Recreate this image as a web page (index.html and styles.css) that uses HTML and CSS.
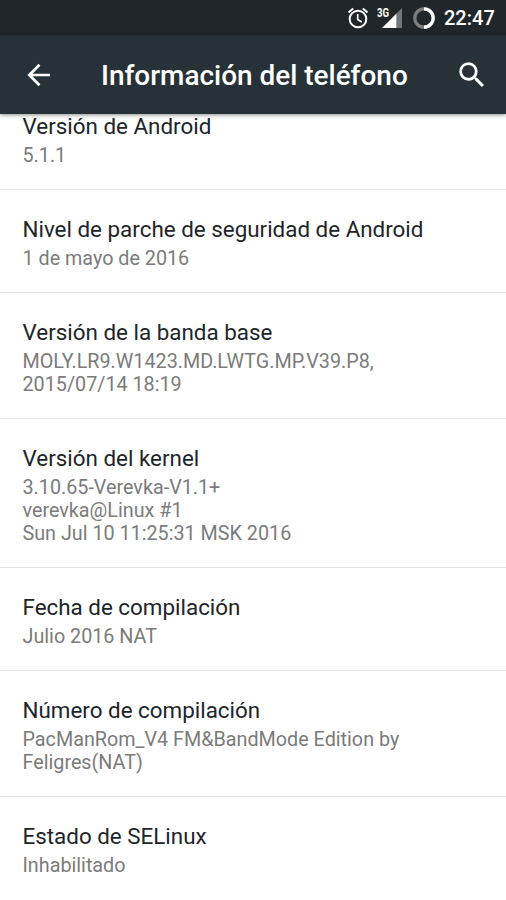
FILE: index.html
```html
<!DOCTYPE html>
<html lang="es">
<head>
<meta charset="utf-8">
<title>Información del teléfono</title>
<link rel="stylesheet" href="styles.css">
</head>
<body>
<div class="status">
  <svg class="alarm" width="22" height="22" viewBox="0 0 22 22" fill="none" stroke="#fff" stroke-width="2"><circle cx="11" cy="12" r="8.300"/><path d="M1.500 5.500L6.200 1.600M20.500 5.500L15.800 1.600"/><path d="M10.700 7v5.500l4 2.500" stroke-width="1.600"/></svg>
  <div class="signal"><span>3G</span><svg width="20" height="20" viewBox="0 0 20 20"><path fill="#737678" d="M14.500 5.500L20 0V20H14.500z"/><path fill="#fff" d="M0 20L14.500 5.500V20z"/></svg></div>
  <svg class="battery" width="22" height="22" viewBox="0 0 22 22"><circle cx="11" cy="11" r="9.200" fill="none" stroke="#7b7e80" stroke-width="3.200"/><path d="M11 1.800a9.200 9.200 0 0 1 0 18.400" fill="none" stroke="#fff" stroke-width="3.200"/></svg>
  <span class="clock">22:47</span>
</div>
<header class="bar">
  <svg class="back" width="34" height="34" viewBox="0 0 34 34"><path fill="none" stroke="#fff" stroke-width="2.700" d="M28 17H7.500M17.500 6.800L7.300 17l10.200 10.200"/></svg>
  <h1>Información del teléfono</h1>
  <svg class="search" width="34" height="34" viewBox="0 0 24 24"><path fill="#fff" d="M15.500 14h-.79l-.28-.27A6.470 6.470 0 0 0 16 9.500 6.500 6.500 0 1 0 9.500 16c1.610 0 3.090-.59 4.230-1.570l.27.28v.79l5 4.990L20.490 19l-4.990-5zm-6 0C7.010 14 5 11.990 5 9.500S7.010 5 9.500 5 14 7.010 14 9.500 11.990 14 9.500 14z"/></svg>
</header>
<main class="list">
  <section class="item first"><h2>Versión de Android</h2><p>5.1.1</p></section>
  <section class="item"><h2>Nivel de parche de seguridad de Android</h2><p>1 de mayo de 2016</p></section>
  <section class="item"><h2>Versión de la banda base</h2><p>MOLY.LR9.W1423.MD.LWTG.MP.V39.P8,<br>2015/07/14 18:19</p></section>
  <section class="item"><h2>Versión del kernel</h2><p>3.10.65-Verevka-V1.1+<br>verevka@Linux #1<br>Sun Jul 10 11:25:31 MSK 2016</p></section>
  <section class="item"><h2>Fecha de compilación</h2><p>Julio 2016 NAT</p></section>
  <section class="item"><h2>Número de compilación</h2><p>PacManRom_V4 FM&amp;BandMode Edition by<br>Feligres(NAT)</p></section>
  <section class="item"><h2>Estado de SELinux</h2><p>Inhabilitado</p></section>
</main>
</body>
</html>
```
FILE: styles.css
```css
* { box-sizing: border-box; }
body { margin: 0; height: 900px; overflow: hidden; display: flex; flex-direction: column; background: #fff; font-family: Roboto, sans-serif; }
.status { flex: none; height: 35px; background: #20262a; display: flex; align-items: center; padding-left: 347px; color: #fff; }
.status svg { flex: none; display: block; }
.signal { position: relative; width: 25px; height: 20px; margin-left: 8px; display: flex; justify-content: flex-end; }
.signal span { position: absolute; left: 0; top: -1px; font-size: 12px; line-height: 12px; font-weight: 700; transform: scaleX(.8); transform-origin: left; }
.battery { margin-left: 11px; }
.clock { margin: 2px 0 0 9px; font-size: 20px; font-weight: 500; line-height: 35px; }
.bar { flex: none; height: 79px; background: #273238; display: flex; align-items: center; padding: 0 17px 0 22px; color: #fff; position: relative; box-shadow: 0 1px 4px rgba(0,0,0,.45); }
.bar h1 { margin: 2px 0 0 45px; font-size: 27.950px; font-weight: 500; white-space: nowrap; }
.search { margin-left: auto; }
.list { flex: 1; min-height: 0; overflow: hidden; }
.item { padding: 26px 22.500px 22px; border-bottom: 1px solid #e5e5e5; white-space: nowrap; }
.item.first { padding-top: 0; margin-top: -1px; }
.item:last-child { border-bottom: 0; }
h2 { margin: 0; font-size: 22.400px; line-height: 27px; font-weight: 400; color: #212529; }
p { margin: 4px 0 0; font-size: 19.760px; line-height: 23px; color: #7b7b7b; }
```
